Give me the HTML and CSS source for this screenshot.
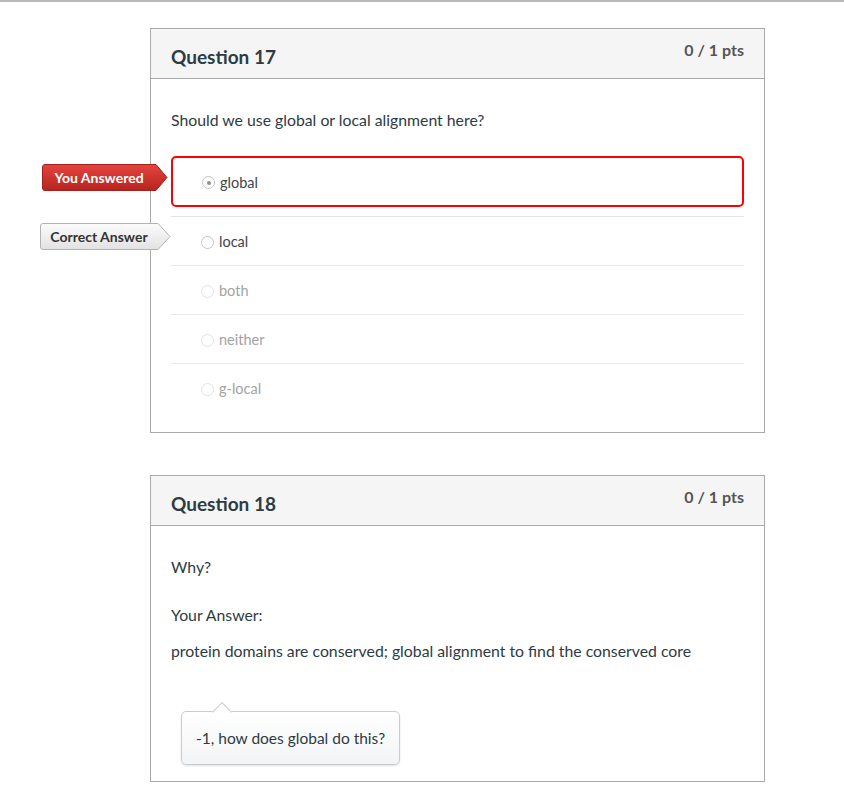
FILE: index.html
```html
<!DOCTYPE html>
<html>
<head>
<meta charset="utf-8">
<link rel="stylesheet" href="styles.css">
</head>
<body>
<div class="topline"></div>
<div class="page">
  <div class="card">
    <div class="card-header">
      <div class="q-title">Question 17</div>
      <div class="q-pts">0 / 1 pts</div>
    </div>
    <div class="card-body">
      <div class="q-text q-main">Should we use global or local alignment here?</div>
      <div class="answers">
        <div class="answer-sel-wrap">
          <div class="badge badge-you">
            <svg class="badge-bg" width="126" height="27" viewBox="0 0 126 27">
              <defs>
                <linearGradient id="gr" x1="0" y1="0" x2="0" y2="1">
                  <stop offset="0" stop-color="#e4443f"/>
                  <stop offset="1" stop-color="#b8231f"/>
                </linearGradient>
              </defs>
              <path d="M3 0.5 H114 L125 13.5 L114 26.5 H3 Q0.5 26.5 0.5 24 V3 Q0.5 0.5 3 0.5 Z" fill="url(#gr)" stroke="#a3201c"/>
            </svg>
            <span class="badge-text badge-text-you">You Answered</span>
          </div>
          <div class="answer-sel">
            <span class="radio radio-on"></span>
            <span class="a-label">global</span>
          </div>
        </div>
        <div class="answer">
          <div class="badge badge-correct">
            <svg class="badge-bg" width="131" height="27" viewBox="0 0 131 27">
              <defs>
                <linearGradient id="gg" x1="0" y1="0" x2="0" y2="1">
                  <stop offset="0" stop-color="#fcfcfc"/>
                  <stop offset="1" stop-color="#e2e2e2"/>
                </linearGradient>
              </defs>
              <path d="M3 0.5 H118 L130 13.5 L118 26.5 H3 Q0.5 26.5 0.5 24 V3 Q0.5 0.5 3 0.5 Z" fill="url(#gg)" stroke="#b3b3b3"/>
            </svg>
            <span class="badge-text badge-text-correct">Correct Answer</span>
          </div>
          <span class="radio"></span>
          <span class="a-label">local</span>
        </div>
        <div class="answer answer-faded">
          <span class="radio"></span>
          <span class="a-label">both</span>
        </div>
        <div class="answer answer-faded">
          <span class="radio"></span>
          <span class="a-label">neither</span>
        </div>
        <div class="answer answer-faded answer-last">
          <span class="radio"></span>
          <span class="a-label">g-local</span>
        </div>
      </div>
    </div>
  </div>

  <div class="card card-2">
    <div class="card-header">
      <div class="q-title">Question 18</div>
      <div class="q-pts">0 / 1 pts</div>
    </div>
    <div class="card-body card-body-essay">
      <div class="q-text q-why">Why?</div>
      <div class="q-text q-your">Your Answer:</div>
      <div class="q-text q-essay">protein domains are conserved; global alignment to find the conserved core</div>
      <div class="comment">-1, how does global do this?</div>
    </div>
  </div>
</div>
</body>
</html>
```

FILE: styles.css
```css
html, body {
  margin: 0;
  padding: 0;
  background: #ffffff;
}
body {
  font-family: Lato, "Open Sans", "Liberation Sans", sans-serif;
  color: #2d3b45;
}
.topline {
  height: 2px;
  background: #b9b9b9;
}
.page {
  padding: 26px 0 40px 150px;
}
.card {
  width: 615px;
  box-sizing: border-box;
  border: 1px solid #aaaaaa;
  background: #fff;
}
.card-2 {
  margin-top: 42px;
}
.card-header {
  height: 50px;
  box-sizing: border-box;
  background: #f5f5f5;
  border-bottom: 1px solid #aaaaaa;
  display: flex;
  justify-content: space-between;
  align-items: flex-start;
  padding: 0 20px;
}
.q-title {
  font-size: 19px;
  font-weight: 700;
  line-height: 1.2;
  padding-top: 17px;
  color: #2d3b45;
}
.q-pts {
  font-size: 16px;
  font-weight: 700;
  line-height: 1.2;
  padding-top: 11px;
  color: #555555;
}
.card-body {
  padding: 29px 20px 20px;
}
.q-text {
  font-size: 15.8px;
  line-height: 24px;
  color: #2d3b45;
}
.q-main {
  margin-bottom: 24px;
}
.answers {
  display: flex;
  flex-direction: column;
}
.answer-sel-wrap {
  position: relative;
  padding-bottom: 9px;
  border-bottom: 1px solid #e4e4e4;
}
.answer-sel {
  height: 51px;
  box-sizing: border-box;
  border: 2px solid #ff0000;
  border-radius: 5px;
  display: flex;
  align-items: center;
  padding: 2px 0 0 29px;
}
.answer {
  position: relative;
  height: 49px;
  box-sizing: border-box;
  border-bottom: 1px solid #e8e8e8;
  display: flex;
  align-items: center;
  padding: 2px 0 0 30px;
}
.answer-last {
  border-bottom: none;
  height: 48px;
}
.radio {
  width: 13px;
  height: 13px;
  box-sizing: border-box;
  border: 1px solid #c4c4c4;
  border-radius: 50%;
  background: #fff;
  display: flex;
  align-items: center;
  justify-content: center;
  flex: none;
}
.radio-on::after {
  content: "";
  width: 4px;
  height: 4px;
  border-radius: 50%;
  background: #8f8f8f;
}
.answer-faded .radio {
  border-color: #e2e2e2;
}
.a-label {
  margin-left: 5px;
  font-size: 14.5px;
  line-height: 20px;
  color: #3d454c;
}
.answer-faded .a-label {
  color: #a3a3a3;
}
.badge {
  position: absolute;
  height: 27px;
}
.badge-bg {
  position: absolute;
  left: 0;
  top: 0;
  display: block;
}
.badge-you {
  left: -129px;
  top: 8px;
  width: 126px;
}
.badge-correct {
  left: -131px;
  top: 6px;
  width: 131px;
}
.badge-text {
  position: absolute;
  left: 0;
  top: 0;
  height: 27px;
  line-height: 27px;
  text-align: center;
  font-size: 14px;
  font-weight: 700;
  white-space: nowrap;
}
.badge-text-you {
  width: 114px;
  color: #ffffff;
}
.badge-text-correct {
  width: 118px;
  color: #333333;
}
.card-body-essay {
  padding-bottom: 16px;
}
.q-why {
  margin-bottom: 24px;
}
.q-your {
  margin-bottom: 12px;
}
.q-essay {
  margin-bottom: 48px;
}
.comment {
  position: relative;
  display: inline-block;
  margin-left: 10px;
  height: 54px;
  box-sizing: border-box;
  line-height: 52px;
  padding: 0 14px;
  font-size: 15.5px;
  color: #2d3b45;
  border: 1px solid #c7cdd1;
  border-radius: 5px;
  background: linear-gradient(#ffffff, #f3f4f5);
  box-shadow: 0 1px 2px rgba(0, 0, 0, 0.12);
}
.comment::before {
  content: "";
  position: absolute;
  top: -7px;
  left: 33px;
  width: 13px;
  height: 13px;
  background: #ffffff;
  border-top: 1px solid #c7cdd1;
  border-left: 1px solid #c7cdd1;
  transform: rotate(45deg);
}
```
